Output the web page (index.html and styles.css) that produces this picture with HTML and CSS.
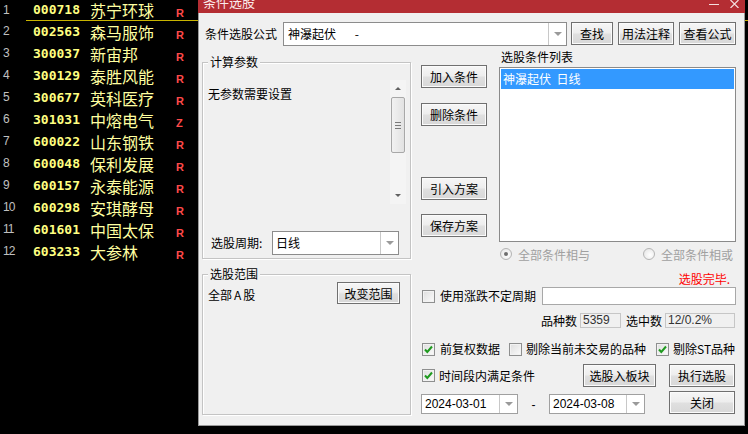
FILE: index.html
```html
<!DOCTYPE html>
<html lang="zh-CN">
<head>
    <meta charset="UTF-8">
    <title>条件选股</title>
    <link rel="stylesheet" href="styles.css">
</head>
<body>
    <div class="stock-list">
        <div class="stock-row first"><span class="num">1</span><div class="cells"><span class="code">000718</span><span class="name">苏宁环球</span><span class="flag">R</span></div></div>
        <div class="stock-row"><span class="num">2</span><div class="cells"><span class="code">002563</span><span class="name">森马服饰</span><span class="flag">R</span></div></div>
        <div class="stock-row"><span class="num">3</span><div class="cells"><span class="code">300037</span><span class="name">新宙邦</span><span class="flag">R</span></div></div>
        <div class="stock-row"><span class="num">4</span><div class="cells"><span class="code">300129</span><span class="name">泰胜风能</span><span class="flag">R</span></div></div>
        <div class="stock-row"><span class="num">5</span><div class="cells"><span class="code">300677</span><span class="name">英科医疗</span><span class="flag">R</span></div></div>
        <div class="stock-row"><span class="num">6</span><div class="cells"><span class="code">301031</span><span class="name">中熔电气</span><span class="flag">Z</span></div></div>
        <div class="stock-row"><span class="num">7</span><div class="cells"><span class="code">600022</span><span class="name">山东钢铁</span><span class="flag">R</span></div></div>
        <div class="stock-row"><span class="num">8</span><div class="cells"><span class="code">600048</span><span class="name">保利发展</span><span class="flag">R</span></div></div>
        <div class="stock-row"><span class="num">9</span><div class="cells"><span class="code">600157</span><span class="name">永泰能源</span><span class="flag">R</span></div></div>
        <div class="stock-row"><span class="num">10</span><div class="cells"><span class="code">600298</span><span class="name">安琪酵母</span><span class="flag">R</span></div></div>
        <div class="stock-row"><span class="num">11</span><div class="cells"><span class="code">601601</span><span class="name">中国太保</span><span class="flag">R</span></div></div>
        <div class="stock-row"><span class="num">12</span><div class="cells"><span class="code">603233</span><span class="name">大参林</span><span class="flag">R</span></div></div>
    </div>

    <div class="dialog">
        <div class="title-bar">
            <span class="title">条件选股</span>
            <span class="win-min"></span>
            <svg class="win-close" width="9" height="8" viewBox="0 0 9 8"><path d="M0.5 0 L8.5 8 M8.5 0 L0.5 8" stroke="#f3dede" stroke-width="1.2"/></svg>
        </div>

        <div class="dialog-body">
            <div class="formula-row">
                <span class="formula-label">条件选股公式</span>
                <div class="combo formula-combo">
                    <span class="combo-text">神瀑起伏       -</span>
                    <span class="combo-drop"></span>
                </div>
                <button class="btn btn-find">查找</button>
                <button class="btn btn-usage">用法注释</button>
                <button class="btn btn-view">查看公式</button>
            </div>

            <div class="main">
                <div class="left-col">
                    <div class="group params">
                        <span class="group-title">计算参数</span>
                        <div class="param-area">
                            <div class="param-text">无参数需要设置</div>
                            <div class="scrollbar">
                                <span class="arrow-up"></span>
                                <span class="thumb"><i></i><i></i><i></i></span>
                                <span class="arrow-down"></span>
                            </div>
                        </div>
                        <div class="period-row">
                            <span class="period-label">选股周期:</span>
                            <div class="combo period-combo">
                                <span class="combo-text">日线</span>
                                <span class="combo-drop"></span>
                            </div>
                        </div>
                    </div>

                    <div class="group scope">
                        <span class="group-title">选股范围</span>
                        <div class="scope-row">
                            <span class="scope-text">全部<span class="latin">A</span>股</span>
                            <button class="btn btn-scope">改变范围</button>
                        </div>
                    </div>
                </div>

                <div class="right-col">
                    <div class="top-block">
                        <div class="btn-col">
                            <button class="btn">加入条件</button>
                            <button class="btn">删除条件</button>
                            <button class="btn">引入方案</button>
                            <button class="btn">保存方案</button>
                        </div>
                        <div class="list-col">
                            <div class="list-label">选股条件列表</div>
                            <div class="cond-list">
                                <div class="cond-item">神瀑起伏&nbsp;&nbsp;日线</div>
                            </div>
                        </div>
                    </div>

                    <div class="radio-row">
                        <span class="radio"><span class="radio-dot checked"></span>全部条件相与</span>
                        <span class="radio radio-or"><span class="radio-dot"></span>全部条件相或</span>
                    </div>

                    <div class="status-row">选股完毕.</div>

                    <div class="period-check-row">
                        <span class="cb"></span>
                        <span class="cb-text">使用涨跌不定周期</span>
                        <span class="text-input"></span>
                    </div>

                    <div class="stats-row">
                        <span class="stat-label">品种数</span>
                        <span class="stat-box count">5359</span>
                        <span class="stat-label second">选中数</span>
                        <span class="stat-box ratio">12/0.2%</span>
                    </div>

                    <div class="check-row">
                        <span class="check-item w1"><span class="cb"><svg width="11" height="11" viewBox="0 0 11 11"><path d="M2 5.5 L4.3 8 L9 2.5" fill="none" stroke="#1f9a1f" stroke-width="2"/></svg></span><span class="cb-text">前复权数据</span></span>
                        <span class="check-item w2"><span class="cb"></span><span class="cb-text">剔除当前未交易的品种</span></span>
                        <span class="check-item"><span class="cb"><svg width="11" height="11" viewBox="0 0 11 11"><path d="M2 5.5 L4.3 8 L9 2.5" fill="none" stroke="#1f9a1f" stroke-width="2"/></svg></span><span class="cb-text">剔除ST品种</span></span>
                    </div>

                    <div class="action-row">
                        <span class="check-item"><span class="cb"><svg width="11" height="11" viewBox="0 0 11 11"><path d="M2 5.5 L4.3 8 L9 2.5" fill="none" stroke="#1f9a1f" stroke-width="2"/></svg></span><span class="cb-text">时间段内满足条件</span></span>
                        <button class="btn btn-board">选股入板块</button>
                        <button class="btn btn-run">执行选股</button>
                    </div>

                    <div class="date-row">
                        <div class="combo date-combo">
                            <span class="combo-text">2024-03-01</span>
                            <span class="combo-drop"></span>
                        </div>
                        <span class="dash">-</span>
                        <div class="combo date-combo second">
                            <span class="combo-text">2024-03-08</span>
                            <span class="combo-drop"></span>
                        </div>
                        <button class="btn btn-close">关闭</button>
                    </div>
                </div>
            </div>
        </div>
    </div>
</body>
</html>
```

FILE: styles.css
```css
* {
    margin: 0;
    padding: 0;
    box-sizing: border-box;
}

body {
    position: relative;
    width: 748px;
    height: 434px;
    overflow: hidden;
    background-color: #000;
    font-family: "Noto Sans CJK SC", sans-serif;
    font-size: 12px;
    color: #000;
}

/* stock list behind the dialog */
.stock-row {
    display: flex;
    height: 22px;
}

.stock-row.first {
    height: 21px;
}

.stock-row .num {
    width: 26px;
    padding-left: 3px;
    color: #c0c0c0;
    font: 12px/21px "Liberation Sans", sans-serif;
    letter-spacing: -1px;
}

.stock-row .cells {
    flex: 1;
    display: flex;
    align-items: center;
}

.stock-row.first .cells {
    border-bottom: 1px solid #c8b400;
}

.code {
    width: 64px;
    padding-left: 7px;
    color: #ffff80;
    font: bold 13px/20px "DejaVu Sans Mono", monospace;
}

.name {
    width: 86px;
    color: #ffffa0;
    font-size: 16px;
    line-height: 20px;
}

.flag {
    margin-top: 6px;
    color: #ff4a4a;
    font: bold 11px/12px "Liberation Sans", sans-serif;
}

/* dialog window */
.dialog {
    position: absolute;
    left: 198px;
    top: 0;
    width: 547px;
    height: 426px;
    display: flex;
    flex-direction: column;
    background-color: #f0f0f0;
}

.title-bar {
    height: 13px;
    display: flex;
    align-items: flex-start;
    overflow: hidden;
    background-color: #b42d33;
    padding-right: 6px;
}

.title {
    margin-top: -5px;
    padding-left: 5px;
    color: #fbeaea;
    font-size: 13px;
    line-height: 14px;
}

.win-min {
    margin-left: auto;
    margin-top: 4px;
    width: 10px;
    height: 1px;
    background-color: #f3dede;
}

.win-close {
    margin-left: 11px;
}

.dialog-body {
    flex: 1;
    padding: 9px 8px 0 3px;
    border: 1px solid #9a9a9a;
    border-top: none;
}

/* buttons and combos */
.btn {
    height: 23px;
    border: 1px solid #707070;
    background: linear-gradient(#f6f6f6 0%, #eeeeee 45%, #dfdfdf 55%, #d8d8d8 100%);
    box-shadow: inset 0 0 0 1px #fbfbfb;
    font-family: "Noto Sans CJK SC", sans-serif;
    font-size: 12px;
    color: #000;
    display: flex;
    align-items: center;
    justify-content: center;
}

.combo {
    display: flex;
    height: 24px;
    border: 1px solid #8c8c8c;
    background-color: #fff;
}

.combo-text {
    flex: 1;
    padding-left: 4px;
    line-height: 22px;
    white-space: pre;
}

.combo-drop {
    width: 18px;
    border-left: 1px solid #c8c8c8;
    display: flex;
    align-items: center;
    justify-content: center;
}

.combo-drop::after {
    content: "";
    border-left: 4px solid transparent;
    border-right: 4px solid transparent;
    border-top: 4px solid #9a9a9a;
}

/* formula row */
.formula-row {
    display: flex;
    align-items: flex-start;
    height: 24px;
}

.formula-label {
    width: 81px;
    padding-left: 3px;
    line-height: 24px;
}

.formula-combo {
    width: 284px;
}

.btn-find {
    width: 42px;
    margin-left: 4px;
}

.btn-usage {
    width: 56px;
    margin-left: 5px;
}

.btn-view {
    width: 57px;
    margin-left: 5px;
}

.main {
    display: flex;
    gap: 10px;
    margin-top: 4px;
}

.left-col {
    width: 209px;
}

.right-col {
    width: 315px;
}

/* group boxes */
.group {
    position: relative;
    border: 1px solid #c4c4c4;
    box-shadow: inset 1px 1px 0 #fff, 1px 1px 0 #fff;
}

.group-title {
    position: absolute;
    left: 5px;
    top: -8px;
    padding: 0 2px;
    line-height: 14px;
    background-color: #f0f0f0;
}

.params {
    height: 197px;
    margin-top: 12px;
}

.param-area {
    display: flex;
    height: 124px;
    margin-top: 17px;
}

.param-text {
    flex: 1;
    padding: 7px 0 0 5px;
    line-height: 14px;
}

.scrollbar {
    width: 16px;
    margin-right: 4px;
    display: flex;
    flex-direction: column;
    align-items: center;
    background-color: #f4f4f4;
}

.arrow-up,
.arrow-down {
    height: 17px;
    display: flex;
    align-items: center;
}

.arrow-up::after {
    content: "";
    border-left: 3px solid transparent;
    border-right: 3px solid transparent;
    border-bottom: 3px solid #606060;
}

.arrow-down {
    margin-top: auto;
}

.arrow-down::after {
    content: "";
    border-left: 3px solid transparent;
    border-right: 3px solid transparent;
    border-top: 3px solid #606060;
}

.thumb {
    width: 14px;
    height: 56px;
    border: 1px solid #a8a8a8;
    border-radius: 2px;
    background: linear-gradient(90deg, #f2f2f2, #e2e2e2);
    display: flex;
    flex-direction: column;
    align-items: center;
    justify-content: center;
    gap: 2px;
}

.thumb i {
    width: 6px;
    height: 1px;
    background-color: #7a7a7a;
}

.period-row {
    display: flex;
    margin-top: 27px;
    height: 24px;
}

.period-label {
    width: 69px;
    padding-left: 8px;
    line-height: 24px;
}

.period-combo {
    width: 127px;
}

.period-combo .combo-text {
    padding-left: 3px;
}

.scope {
    height: 141px;
    margin-top: 15px;
}

.scope-row {
    display: flex;
    align-items: flex-start;
    padding-top: 7px;
}

.scope-text {
    margin-top: 6px;
    padding-left: 5px;
    line-height: 14px;
}

.scope-text .latin {
    padding: 0 2px;
}

.btn-scope {
    width: 63px;
    height: 22px;
    margin-left: auto;
    margin-right: 10px;
}

/* right column */
.top-block {
    display: flex;
    height: 192px;
}

.btn-col {
    width: 66px;
    display: flex;
    flex-direction: column;
}

.btn-col .btn {
    margin-top: 15px;
}

.btn-col .btn:nth-child(3) {
    margin-top: 51px;
}

.btn-col .btn:nth-child(4) {
    margin-top: 14px;
}

.list-col {
    flex: 1;
    margin-left: 12px;
}

.list-label {
    padding-left: 2px;
    line-height: 14px;
    margin-bottom: 3px;
}

.cond-list {
    height: 175px;
    padding: 1px;
    border: 1px solid #8a8a8a;
    background-color: #fff;
}

.cond-item {
    height: 20px;
    padding-left: 2px;
    line-height: 20px;
    color: #fff;
    background-color: #3399ff;
}

.radio-row {
    display: flex;
    align-items: center;
    height: 16px;
    margin-top: 4px;
    padding-left: 79px;
}

.radio {
    display: flex;
    align-items: center;
    gap: 6px;
    color: #a0a0a0;
}

.radio-or {
    margin-left: 53px;
}

.radio-dot {
    width: 12px;
    height: 12px;
    border-radius: 50%;
    border: 1px solid #b4b4b4;
    background: radial-gradient(circle at 60% 60%, #ffffff, #e2e2e2);
    display: flex;
    align-items: center;
    justify-content: center;
}

.radio-dot.checked::after {
    content: "";
    width: 4px;
    height: 4px;
    border-radius: 50%;
    background-color: #6e6e6e;
}

.status-row {
    margin-top: 10px;
    padding-right: 6px;
    line-height: 14px;
    text-align: right;
    color: #ff0000;
}

.cb {
    width: 13px;
    height: 13px;
    flex-shrink: 0;
    border: 1px solid #8e8f8f;
    background: linear-gradient(135deg, #dedede, #fbfbfb);
    box-shadow: inset 0 0 0 1px #f2f2f2;
    display: flex;
    align-items: center;
    justify-content: center;
}

.cb-text {
    margin-left: 5px;
    line-height: 14px;
    white-space: nowrap;
}

.period-check-row {
    display: flex;
    align-items: center;
    height: 18px;
    margin-top: 1px;
    padding-left: 1px;
}

.text-input {
    flex: 1;
    height: 18px;
    margin-left: 6px;
    border: 1px solid #a8a8a8;
    background-color: #fff;
}

.stats-row {
    display: flex;
    justify-content: flex-end;
    align-items: center;
    height: 15px;
    margin-top: 8px;
    padding-right: 1px;
}

.stat-label {
    margin-right: 3px;
}

.stat-label.second {
    margin-left: 5px;
}

.stat-box {
    height: 15px;
    padding-left: 2px;
    border: 1px solid #c6c6c6;
    color: #333;
    font: 12px/13px "Liberation Sans", sans-serif;
}

.stat-box.count {
    width: 41px;
}

.stat-box.ratio {
    width: 70px;
}

.check-row {
    display: flex;
    align-items: center;
    height: 16px;
    margin-top: 13px;
    padding-left: 1px;
}

.check-item {
    display: flex;
    align-items: center;
}

.check-item.w1 {
    width: 87px;
}

.check-item.w2 {
    width: 147px;
}

.check-row .check-item + .check-item .cb-text {
    margin-left: 4px;
}

.action-row {
    display: flex;
    align-items: center;
    height: 23px;
    margin-top: 7px;
    padding: 0 1px;
}

.action-row .cb-text {
    margin-left: 4px;
}

.btn-board {
    width: 73px;
    margin-left: auto;
}

.btn-run {
    width: 66px;
    margin-left: 13px;
}

.date-row {
    display: flex;
    align-items: flex-end;
    height: 23px;
    margin-top: 4px;
    padding-right: 1px;
}

.date-combo {
    width: 97px;
    height: 20px;
    border-color: #a0a0a0;
}

.date-combo.second {
    width: 96px;
}

.date-combo .combo-text {
    padding-left: 3px;
    line-height: 18px;
    font-family: "Liberation Sans", sans-serif;
}

.dash {
    width: 31px;
    text-align: center;
    line-height: 18px;
    font-family: "Liberation Sans", sans-serif;
}

.btn-close {
    width: 66px;
    margin-left: auto;
}
```
